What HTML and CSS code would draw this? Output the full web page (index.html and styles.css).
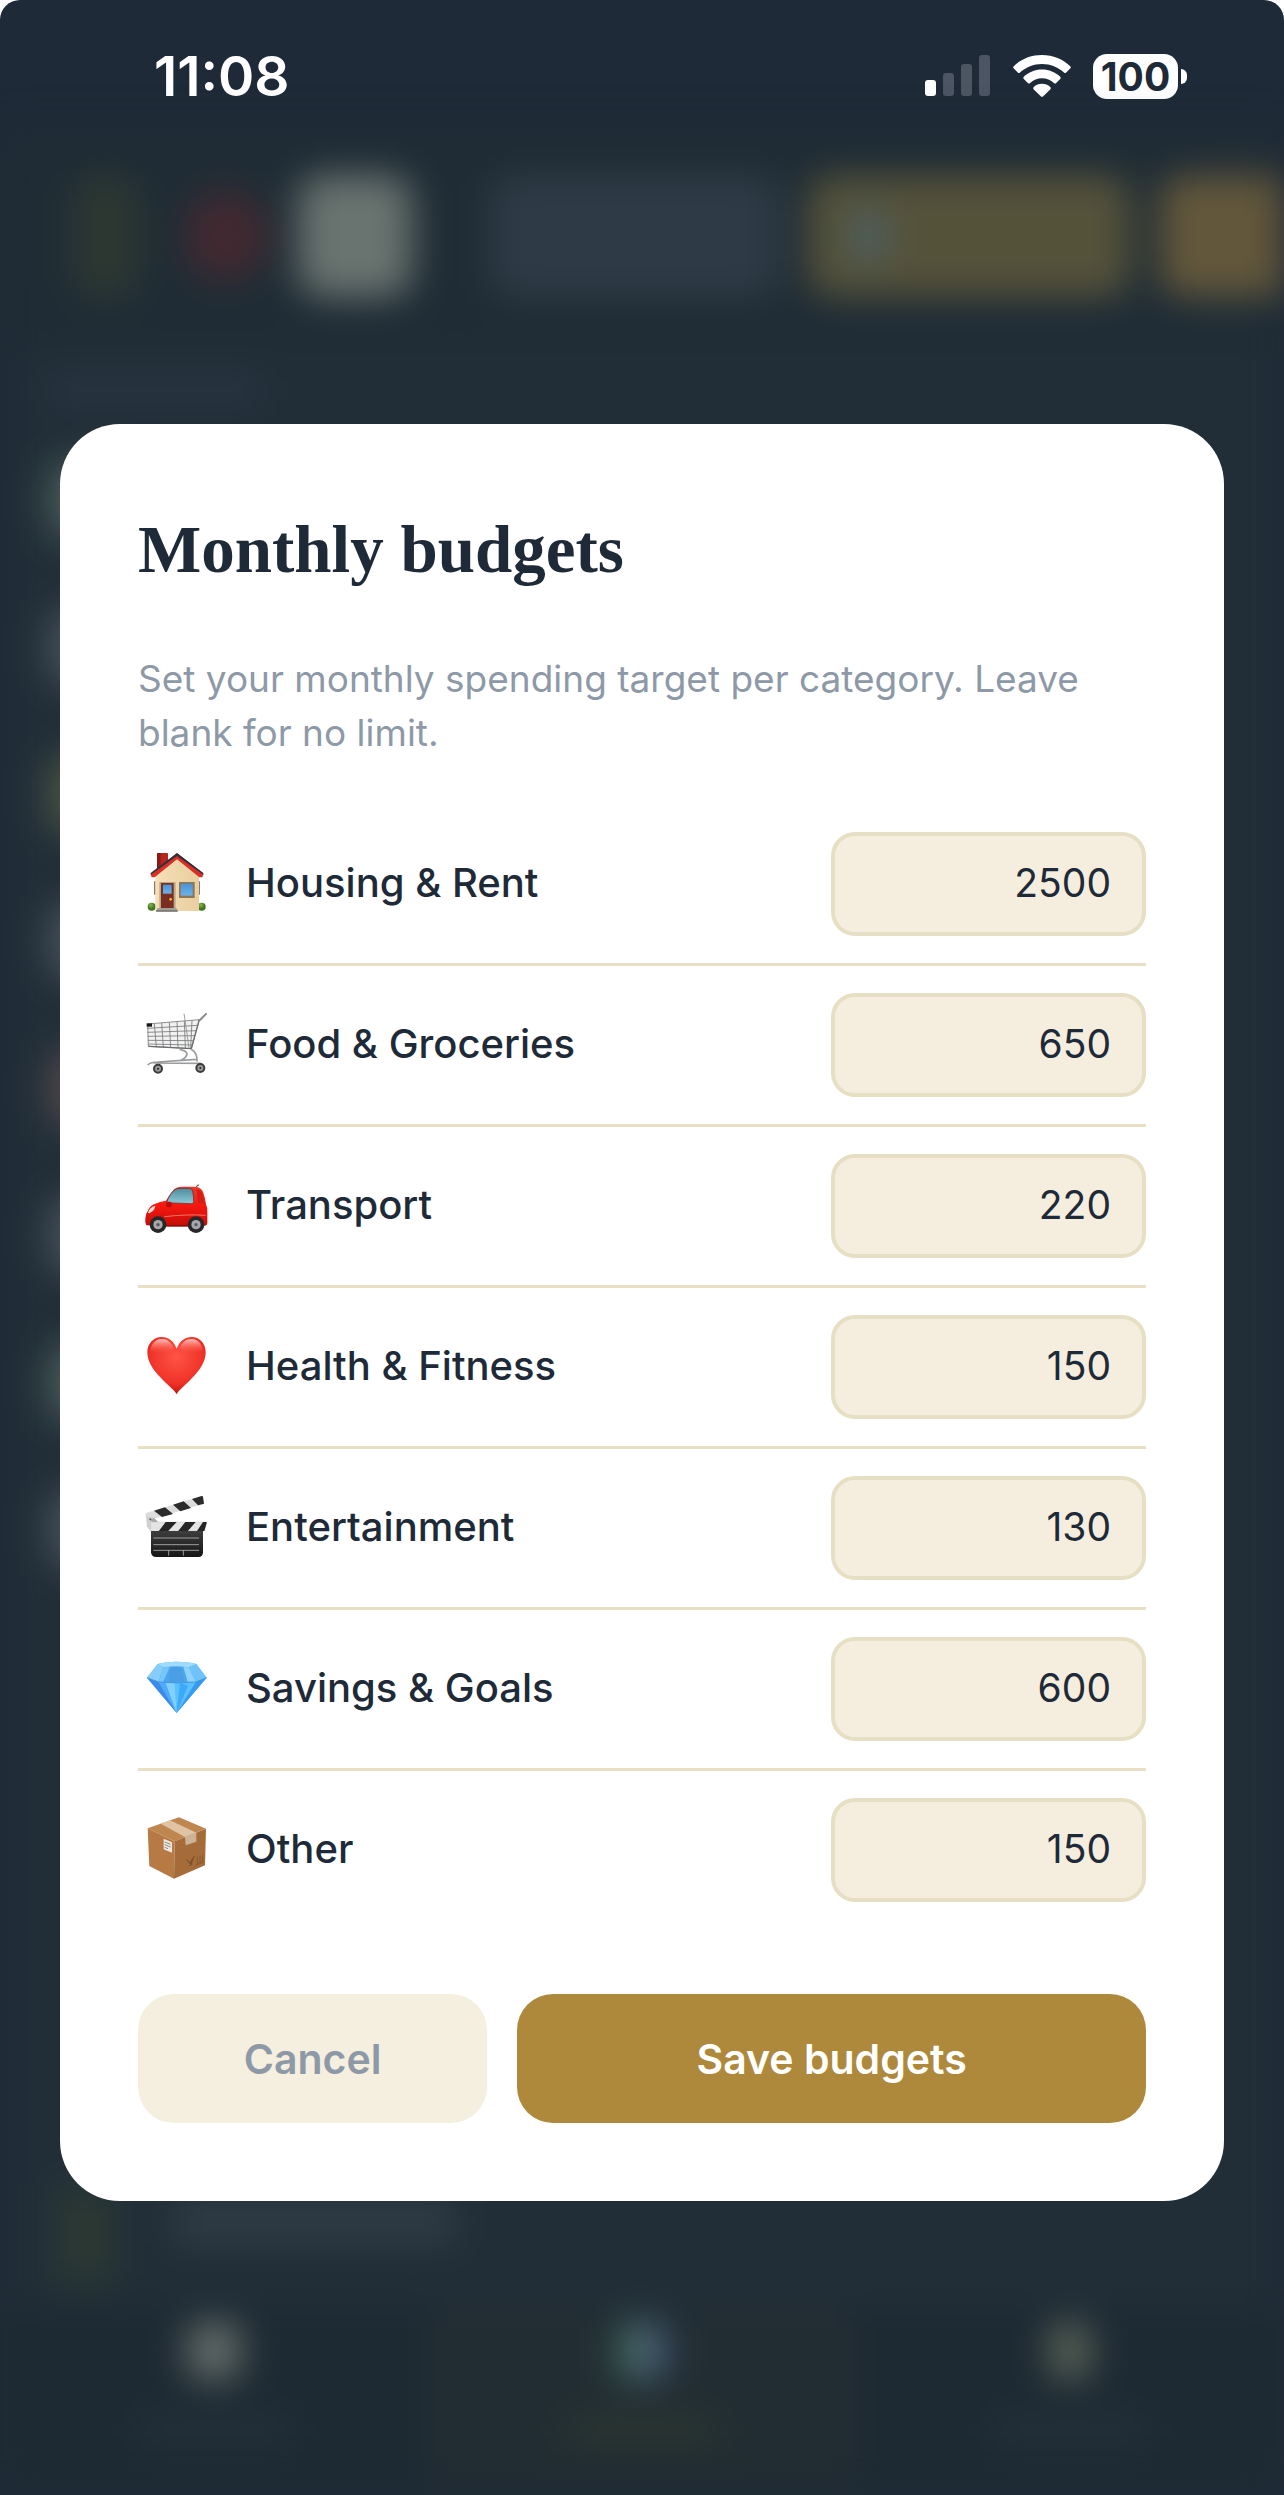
FILE: index.html
```html
<!DOCTYPE html>
<html lang="en">
<head>
  <meta charset="UTF-8">
  <meta name="viewport" content="width=device-width, initial-scale=1.0">
  <title>Monthly budgets</title>
  <link rel="stylesheet" href="styles.css">
</head>
<body>
  <div class="phone">
    <header class="status-bar">
      <span class="time">11:08</span>
      <div class="status-icons">
        <svg width="66" height="42" viewBox="0 0 66 42">
          <rect x="0" y="25" width="11" height="16" rx="3" fill="#fff"/>
          <rect x="18" y="18" width="11" height="23" rx="3" fill="#4c5662"/>
          <rect x="36" y="9" width="11" height="32" rx="3" fill="#4c5662"/>
          <rect x="54" y="0" width="11" height="41" rx="3" fill="#4c5662"/>
        </svg>
        <svg width="58" height="42" viewBox="0 0 58 42" fill="#fff">
          <path d="M29 0C18 0 8 4 .8 11.200q-1.200 1.200 0 2.400l4 4q1 1 2.200 0C13 12 20.500 9 29 9s16 3 22 8.600q1.200 1 2.200 0l4-4q1.200-1.200 0-2.400C50 4 40 0 29 0z"/>
          <path d="M29 14.500c-7 0-13.400 2.700-18.200 7.200q-1.200 1.200 0 2.400l4 4q1.100 1 2.300 0c3.200-3 7.300-4.800 11.900-4.800s8.700 1.800 11.900 4.800q1.200 1 2.300 0l4-4q1.200-1.200 0-2.400C42.400 17.200 36 14.500 29 14.500z"/>
          <path d="M29 28.800c-3.200 0-6 1.200-8.200 3.200q-1.200 1.200 0 2.400l7.200 7.200q1 .8 2 0l7.200-7.200q1.200-1.200 0-2.400c-2.200-2-5-3.200-8.200-3.200z"/>
        </svg>
        <div class="battery">
          <span class="battery-level">100</span>
          <span class="battery-cap"></span>
        </div>
      </div>
    </header>

    <div class="screen">
      <!-- App behind the dialog, blurred out -->
      <div class="app" aria-hidden="true">
        <div class="toolbar">
          <span class="tool tool-logo"></span>
          <span class="tool tool-alert"></span>
          <span class="tool tool-tile"></span>
          <span class="tool tool-filter"></span>
          <span class="tool tool-gold"><i class="tool-gem"></i></span>
          <span class="tool tool-amber"></span>
        </div>
        <div class="heading-bar"></div>
        <div class="list">
          <span class="avatar avatar-green"></span>
          <span class="avatar"></span>
          <span class="avatar avatar-olive"></span>
          <span class="avatar"></span>
          <span class="avatar avatar-red"></span>
          <span class="avatar"></span>
          <span class="avatar avatar-green"></span>
          <span class="avatar"></span>
        </div>
        <div class="account">
          <span class="account-icon"></span>
          <span class="account-name"></span>
        </div>
        <div class="tabs">
          <div class="tab"><span class="tab-icon"></span><span class="tab-label"></span></div>
          <div class="tab tab-active"><span class="tab-icon tab-chart"></span><span class="tab-label"></span></div>
          <div class="tab"><span class="tab-icon tab-bulb"></span><span class="tab-label"></span></div>
        </div>
      </div>

      <form class="modal">
        <h1 class="modal-title">Monthly budgets</h1>
        <p class="modal-text">Set your monthly spending target per category. Leave blank for no limit.</p>

        <div class="budget-list">
          <div class="budget-row">
            <svg class="icon" viewBox="0 0 192 192">
              <defs>
                <linearGradient id="wall" x1="0" x2="1"><stop offset="0" stop-color="#f6dfb6"/><stop offset="1" stop-color="#e9cfa0"/></linearGradient>
                <linearGradient id="glass" y2="1" x2="0"><stop offset="0" stop-color="#4a93d6"/><stop offset="1" stop-color="#6db2e8"/></linearGradient>
                <radialGradient id="bush" cx=".4" cy=".3"><stop offset="0" stop-color="#86b552"/><stop offset="1" stop-color="#3f7420"/></radialGradient>
              </defs>
              <path d="M36 5q0-2 2-2h29q2 0 2 2v30L36 62z" fill="#b5261f"/>
              <path d="M36 5q0-2 2-2h9v55l-11 4z" fill="#8c1a17"/>
              <path d="M27 88h5v40h-5zM160 88h5v40h-5z" fill="#8b7b67"/>
              <circle cx="20" cy="164" r="12" fill="url(#bush)"/>
              <circle cx="170" cy="164" r="12" fill="url(#bush)"/>
              <path d="M31 72l65-54 66 54v105H31z" fill="url(#wall)"/>
              <path d="M96 4l79 62-3 10h-9L96 22 29 76h-9l-3-10z" fill="#d92f26"/>
              <path d="M96 3l79 60v5L96 12 17 68v-5z" fill="#2c3038"/>
              <path d="M43 90h49v80H43z" fill="#b9a88a"/>
              <path d="M48 93h38v76H48z" fill="#7b2f22"/>
              <path d="M54 98h26v27H54z" fill="url(#glass)"/>
              <circle cx="77" cy="142" r="4" fill="#f1bd3e"/>
              <path d="M102 90h47v48h-47z" fill="#8f7754"/>
              <path d="M107 95h36v36h-36z" fill="url(#glass)"/>
              <path d="M38 168h56l4 11H33z" fill="#a39e98"/>
              <path d="M33 174h65v5H33z" fill="#7f7b76"/>
            </svg>
            <label class="budget-name" for="housing">Housing &amp; Rent</label>
            <input class="budget-input" id="housing" type="text" inputmode="numeric" value="2500">
          </div>
          <div class="budget-row">
            <svg class="icon" viewBox="0 0 192 192" fill="none" stroke="#77787a" stroke-width="2.500">
              <path d="M8 33L163 20 139 107 10 100z" fill="#f1f1f1"/>
              <path d="M6 46l152-9M7 58l147-5M8 70l143-2M9 82l138 1M10 93l132 3M28 32l6 69M50 30l5 72M73 28l4 75M96 26l3 78M118 24l3 81M141 22l-4 84"/>
              <path d="M117 2q5 30 15 104M162 22q3-8 22-21" stroke="#8b8c8e"/>
              <path d="M163 20l-24 87-129-7" stroke-width="4" stroke="#6b6c6e"/>
              <path d="M185 1l-20 21" stroke-width="5" stroke="#8a8b8d"/>
              <path d="M104 109q32 7 17 24-4 6-14 9M138 108q20 12 18 38M8 156q10-9 30-9l118-8M28 150l140 1" stroke-width="5" stroke="#9a9b9d"/>
              <path d="M5 31h16v10H5z" fill="#17181a" stroke="none"/>
              <circle cx="39" cy="167" r="12" fill="#999" stroke="#3b3b3d" stroke-width="6"/>
              <circle cx="166" cy="165" r="12" fill="#999" stroke="#3b3b3d" stroke-width="6"/>
              <circle cx="39" cy="167" r="3" fill="#222" stroke="none"/>
              <circle cx="166" cy="165" r="3" fill="#222" stroke="none"/>
            </svg>
            <label class="budget-name" for="food">Food &amp; Groceries</label>
            <input class="budget-input" id="food" type="text" inputmode="numeric" value="650">
          </div>
          <div class="budget-row">
            <svg class="icon" viewBox="0 0 192 192">
              <defs>
                <linearGradient id="paint" x2="0" y2="1"><stop offset="0" stop-color="#ee3a2c"/><stop offset=".5" stop-color="#f5180f"/><stop offset="1" stop-color="#c50c08"/></linearGradient>
                <linearGradient id="shade" x2="0" y2="1"><stop offset="0" stop-color="#4e8c9b"/><stop offset="1" stop-color="#8ccbd8"/></linearGradient>
              </defs>
              <path d="M153 43l4-9 5-1" stroke="#333" stroke-width="3" fill="none"/>
              <path d="M1 134q0-14 7-22 5-15 19-21 18-9 36-11 8-14 18-27 10-15 30-15h36q20 0 27 15 6 16 9 38 5 10 4 25v30q0 8-8 9H60L4 154q-5-8-3-20z" fill="url(#paint)"/>
              <path d="M65 86q9-28 24-38 6-5 17-5h27q8 0 10 8 3 16 3 33 0 5-6 5z" fill="url(#shade)" stroke="#7b1a18" stroke-width="2"/>
              <path d="M154 45q13 1 18 15 5 12 8 28-10 2-22-1 0-26-4-42z" fill="#d81c16"/>
              <rect x="64" y="83" width="16" height="17" rx="5" fill="#bd0e0a"/>
              <path d="M9 116q5-16 22-21-1 14-18 23z" fill="#f7dcd8"/>
              <path d="M58 128q70-8 124-4" stroke="#ff7266" stroke-width="3" fill="none"/>
              <path d="M60 153h70v5H60z" fill="#8e0a07"/>
              <circle cx="39" cy="152" r="25" fill="#272729"/><circle cx="39" cy="152" r="14" fill="#a5a7aa"/><circle cx="39" cy="152" r="5" fill="#56585b"/>
              <circle cx="153" cy="152" r="25" fill="#272729"/><circle cx="153" cy="152" r="14" fill="#a5a7aa"/><circle cx="153" cy="152" r="5" fill="#56585b"/>
            </svg>
            <label class="budget-name" for="transport">Transport</label>
            <input class="budget-input" id="transport" type="text" inputmode="numeric" value="220">
          </div>
          <div class="budget-row">
            <svg class="icon" viewBox="0 0 192 192">
              <defs>
                <radialGradient id="heart" cx=".5" cy=".35" r=".65"><stop offset="0" stop-color="#ff5346"/><stop offset=".7" stop-color="#f03329"/><stop offset="1" stop-color="#c41612"/></radialGradient>
                <linearGradient id="shine" x2="0" y2="1"><stop offset="0" stop-color="#ffc6c0"/><stop offset="1" stop-color="#ff5a4e" stop-opacity="0"/></linearGradient>
              </defs>
              <path d="M95 178C82 153 7 110 7 52 7 24 27 6 50 6c20 0 36 12 45 35 9-23 25-35 45-35 23 0 42 18 42 46 0 58-74 101-87 126z" fill="url(#heart)"/>
              <path d="M16 46c3-20 17-34 34-34 16 0 30 9 37 30-20 16-50 14-71 4z" fill="url(#shine)"/>
              <path d="M103 42c7-21 21-30 37-30 17 0 30 12 33 34-20 10-50 12-70-4z" fill="url(#shine)"/>
            </svg>
            <label class="budget-name" for="health">Health &amp; Fitness</label>
            <input class="budget-input" id="health" type="text" inputmode="numeric" value="150">
          </div>
          <div class="budget-row">
            <svg class="icon" viewBox="0 0 192 192">
              <defs>
                <linearGradient id="slate" x2="0" y2="1"><stop offset="0" stop-color="#3d3d3d"/><stop offset="1" stop-color="#161616"/></linearGradient>
              </defs>
              <path d="M1 52l169-52q4 0 4 3l3 20L27 68 3 63z" fill="#dcdcdc"/>
              <path d="M27 44l33-10 24 20-33 9zM84 26l32-10 22 20-32 10zM141 9l29-9q4 0 4 3l3 20-18 5z" fill="#2b2b2b"/>
              <path d="M3 60l24 5 27 27-18 14H17L6 92z" fill="#d0d0d0"/>
              <path d="M27 66l27 27-14 8q-7-18-26-30z" fill="#aaa"/>
              <circle cx="16" cy="70" r="3" fill="#555"/><circle cx="22" cy="96" r="3" fill="#555"/>
              <path d="M17 78h167q2 0 1 3l-7 24H17z" fill="#e4e4e4" stroke="#bbb"/>
              <path d="M62 78h33L69 106H41zM121 78h31l-24 28H99zM174 78h10q2 0 1 3l-7 24h-22z" fill="#252525"/>
              <path d="M18 105h156v64q0 14-14 14H33q-14 0-15-14z" fill="url(#slate)"/>
              <path d="M25 126h137M25 146h137M25 163h137M71 163v16M115 163v16" stroke="#b4b4b4" stroke-width="2.500"/>
            </svg>
            <label class="budget-name" for="entertainment">Entertainment</label>
            <input class="budget-input" id="entertainment" type="text" inputmode="numeric" value="130">
          </div>
          <div class="budget-row">
            <svg class="icon" viewBox="0 0 192 192">
              <path d="M6 62L38 21q25-7 56-7 36 0 60 7l31 41-90 106z" fill="#55b4fa"/>
              <path d="M38 21q25-7 56-7 36 0 60 7l-23 10q-37-5-75 0z" fill="#9edcff"/>
              <path d="M38 21l18 10-15 43L6 62z" fill="#86cdfc"/>
              <path d="M154 21l-23 10 22 43 32-12z" fill="#6fc3fa"/>
              <path d="M56 31q38-5 75 0l22 43q-56 6-112 0z" fill="#4ba6ef"/>
              <path d="M56 31h18L54 74H41z" fill="#79c6fa"/><path d="M115 30l16 1 22 43h-25z" fill="#8dd3fd"/><path d="M77 31l-6 43h47L109 30z" fill="#4a9fe4"/>
              <path d="M6 62l35 13 54 93z" fill="#3a8aec"/>
              <path d="M41 75q30 4 48 3l6 90z" fill="#4fabf9"/>
              <path d="M89 78q40 1 64-4L95 168z" fill="#5cc0ff"/>
              <path d="M153 74l32-12-90 106z" fill="#359bf0"/>
              <path d="M62 78h27l6 90z" fill="#80d1ff"/><path d="M105 78l24 8-34 82z" fill="#3ba8fa"/>
              <path d="M6 62l35 13q56 6 112 0l32-13" fill="none" stroke="#3c8bd8" stroke-width="2"/>
            </svg>
            <label class="budget-name" for="savings">Savings &amp; Goals</label>
            <input class="budget-input" id="savings" type="text" inputmode="numeric" value="600">
          </div>
          <div class="budget-row">
            <svg class="icon" viewBox="0 0 192 192">
              <path d="M8 31L102-2l81 34-94 38z" fill="#c08650"/>
              <path d="M8 31l81 39-2 112-74-38z" fill="#b87a45"/>
              <path d="M183 32L89 70l-2 112 93-40z" fill="#a56c3a"/>
              <path d="M47 17l28-10 79 37-34 13z" fill="#dec3a5"/>
              <path d="M120 57l34-13v27l-32 11z" fill="#ceb295"/>
              <path d="M56 62l25 11v31l-25-10z" fill="#ece8e0"/>
              <path d="M59 72l18 7M59 80l18 7M59 88l10 4" stroke="#8f8c88" stroke-width="3"/>
              <path d="M124 124l10 10 14-20-10 28zM132 144l10-4M157 117v22M165 114v22M173 111v22M151 142l24-10" fill="#7d4e28" stroke="#7d4e28" stroke-width="2"/>
            </svg>
            <label class="budget-name" for="other">Other</label>
            <input class="budget-input" id="other" type="text" inputmode="numeric" value="150">
          </div>
        </div>

        <div class="actions">
          <button class="btn btn-cancel" type="button">Cancel</button>
          <button class="btn btn-save" type="submit">Save budgets</button>
        </div>
      </form>
    </div>
  </div>
</body>
</html>
```
FILE: styles.css
```css
* {
  box-sizing: border-box;
}

body {
  margin: 0;
  background: #fff;
  color: #1e2a37;
  font-family: Inter, "Liberation Sans", sans-serif;
}

.phone {
  display: flex;
  flex-direction: column;
  min-height: 100vh;
  background: #1e2a37;
  border-radius: 20px 20px 0 0;
  overflow: hidden;
}

/* Status bar */
.status-bar {
  display: flex;
  justify-content: space-between;
  align-items: center;
  height: 130px;
  padding: 22px 97px 0 154px;
  color: #fff;
}

.time {
  font-size: 55px;
  font-weight: 600;
}

.status-icons {
  display: flex;
  align-items: center;
  gap: 22px;
}

.battery {
  display: flex;
  align-items: center;
  gap: 3px;
}

.battery-level {
  width: 85px;
  height: 45px;
  border-radius: 14px;
  background: #fff;
  color: #1e2a37;
  font-size: 39px;
  font-weight: 700;
  line-height: 45px;
  text-align: center;
}

.battery-cap {
  width: 6px;
  height: 15px;
  border-radius: 0 8px 8px 0;
  background: #fff;
}

.screen {
  position: relative;
  flex: 1;
  display: flex;
  align-items: center;
  padding: 60px;
}

/* Blurred app behind the dialog */
.app {
  position: absolute;
  inset: 0;
  display: flex;
  flex-direction: column;
  background: #212e38;
  filter: blur(18px);
  overflow: hidden;
}

.toolbar {
  display: flex;
  align-items: center;
  height: 212px;
  padding: 0 0 0 74px;
  background: #1f2c35;
}

.tool {
  flex: none;
  height: 122px;
  border-radius: 24px;
}

.tool-logo {
  width: 64px;
  margin-right: 46px;
  background: #2d3832;
}

.tool-alert {
  width: 84px;
  height: 90px;
  margin-right: 30px;
  border-radius: 50%;
  background: #432931;
}

.tool-tile {
  width: 114px;
  margin-right: 78px;
  background: #69736f;
}

.tool-filter {
  width: 290px;
  margin-right: 28px;
  background: #2e3b46;
}

.tool-gold {
  display: flex;
  align-items: center;
  width: 322px;
  margin-right: 30px;
  padding-left: 42px;
  background: #55523a;
}

.tool-gem {
  width: 36px;
  height: 46px;
  background: #4b6064;
}

.tool-amber {
  width: 200px;
  background: #63573b;
}

.heading-bar {
  width: 210px;
  height: 28px;
  margin: 34px 0 22px 50px;
  background: #293541;
}

.list {
  display: flex;
  flex-direction: column;
  gap: 67px;
  padding: 34px 48px;
}

.avatar {
  width: 110px;
  height: 80px;
  border-radius: 24px;
  background: #45525b;
}

.avatar-green {
  background: #4a5b58;
}

.avatar-olive {
  background: #4b5443;
}

.avatar-red {
  background: #50474b;
}

.account {
  display: flex;
  gap: 60px;
  margin-top: auto;
  padding: 0 54px 20px;
}

.account-icon {
  width: 60px;
  height: 100px;
  background: #2b3833;
}

.account-name {
  width: 280px;
  height: 44px;
  margin-top: 14px;
  background: #303c45;
}

.tabs {
  display: flex;
  height: 190px;
  background: #1e2a33;
}

.tab {
  flex: 1;
  display: flex;
  flex-direction: column;
  align-items: center;
  gap: 38px;
  padding-top: 18px;
}

.tab-active {
  background: #222d33;
}

.tab-icon {
  width: 52px;
  height: 56px;
  border-radius: 12px;
  background: #656e6a;
}

.tab-chart {
  background: linear-gradient(90deg, #2f5a46, #547078 50%, #35466c);
}

.tab-bulb {
  width: 40px;
  background: #5a6458;
}

.tab-label {
  width: 150px;
  height: 26px;
  background: #23303a;
}

.tab-active .tab-label {
  background: #2b362f;
}

/* Dialog */
.modal {
  position: relative;
  width: 100%;
  padding: 78px;
  border-radius: 60px;
  background: #fff;
}

.modal-title {
  margin: 0 0 56px;
  font-family: "Liberation Serif", serif;
  font-size: 67px;
  font-weight: 700;
  line-height: 94px;
}

.modal-text {
  margin: 0 0 45px;
  color: #8e99a8;
  font-size: 37px;
  line-height: 54px;
}

.budget-row {
  display: flex;
  align-items: center;
  gap: 30px;
  padding: 27px 0;
  border-bottom: 3px solid #e8dfc5;
}

.budget-row:last-child {
  border-bottom: none;
}

.icon {
  flex: none;
  width: 78px;
  height: 64px;
  overflow: visible;
}

.budget-name {
  flex: 1;
  padding-bottom: 3px;
  font-size: 40px;
  font-weight: 500;
}

.budget-input {
  width: 315px;
  height: 104px;
  padding: 0 31px 4px;
  border: 4px solid #e7dfc3;
  border-radius: 24px;
  background: #f5eedf;
  color: #1e2a37;
  font-family: inherit;
  font-size: 39px;
  text-align: right;
}

.actions {
  display: flex;
  gap: 30px;
  margin-top: 65px;
}

.btn {
  height: 129px;
  padding: 0;
  border: none;
  border-radius: 36px;
  font-family: inherit;
  font-size: 41px;
  font-weight: 600;
  cursor: pointer;
}

.btn-cancel {
  flex: 5;
  background: #f5efdf;
  color: #8e99a8;
}

.btn-save {
  flex: 9;
  background: #ae893c;
  color: #fff;
}
```
